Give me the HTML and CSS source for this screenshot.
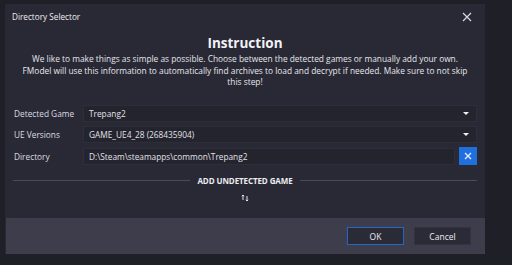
FILE: index.html
```html
<!DOCTYPE html>
<html>
<head>
<meta charset="utf-8">
<link rel="stylesheet" href="styles.css">
</head>
<body>
<div class="dialog">
  <div class="titlebar">
    <span class="title">Directory Selector</span>
    <svg class="close" width="10" height="10" viewBox="0 0 10 10"><path d="M1 1L9 9M9 1L1 9" stroke="#d8d8de" stroke-width="1.2"/></svg>
  </div>
  <div class="content">
    <h1 class="heading">Instruction</h1>
    <p class="intro">We like to make things as simple as possible. Choose between the detected games or manually add your own.<br>FModel will use this information to automatically find archives to load and decrypt if needed. Make sure to not skip<br>this step!</p>
    <div class="form">
      <div class="row">
        <span class="label">Detected Game</span>
        <div class="field select"><span>Trepang2</span><span class="caret"></span></div>
      </div>
      <div class="row">
        <span class="label">UE Versions</span>
        <div class="field select"><span>GAME_UE4_28 (268435904)</span><span class="caret"></span></div>
      </div>
      <div class="row">
        <span class="label">Directory</span>
        <div class="field text"><span>D:\Steam\steamapps\common\Trepang2</span></div>
        <button class="clear"><svg width="8" height="8" viewBox="0 0 8 8"><path d="M1 1L7 7M7 1L1 7" stroke="#e6eefa" stroke-width="1.3"/></svg></button>
      </div>
    </div>
    <div class="divider"><span class="line"></span><span class="divtext">ADD UNDETECTED GAME</span><span class="line"></span></div>
    <div class="toggle">
      <svg width="8" height="8" viewBox="0 0 8 8"><path d="M2 6V1M0.8 2.2L2 1L3.2 2.2M6 2V7M4.8 5.8L6 7L7.2 5.8" stroke="#e4e4ea" stroke-width="1" fill="none"/></svg>
    </div>
  </div>
  <div class="footer">
    <button class="btn ok">OK</button>
    <button class="btn">Cancel</button>
  </div>
</div>
</body>
</html>
```
FILE: styles.css
```css
html, body {
  margin: 0;
  padding: 0;
}
body {
  background: #1f1f28;
  width: 512px;
  height: 265px;
  overflow: hidden;
  font-family: "Open Sans", "Noto Sans", sans-serif;
  color: #e8e8ee;
  padding: 4px 0 0 5px;
  box-sizing: border-box;
}
.dialog {
  width: 480px;
  height: 250px;
  background: #292935;
  display: flex;
  flex-direction: column;
}
.titlebar {
  height: 25px;
  display: flex;
  align-items: center;
  justify-content: space-between;
  padding: 0 13px 0 7px;
  flex-shrink: 0;
}
.title {
  font-size: 8.2px;
  color: #eeeef2;
}
.close {
  display: block;
}
.content {
  flex: 1;
  display: flex;
  flex-direction: column;
  padding: 0 8px 0 8px;
}
.heading {
  margin: 5px 0 0;
  font-size: 13.5px;
  font-weight: 700;
  text-align: center;
  line-height: 18px;
  color: #f2f2f6;
}
.intro {
  margin: 1px -8px 0;
  font-size: 8.35px;
  line-height: 11.5px;
  text-align: center;
  white-space: nowrap;
  color: #e6e6ec;
}
.form {
  margin-top: 17px;
  display: flex;
  flex-direction: column;
  gap: 4.5px;
}
.row {
  display: flex;
  align-items: center;
  gap: 4px;
  height: 17px;
}
.label {
  width: 65px;
  padding-left: 1px;
  font-size: 8.3px;
  color: #dcdce2;
}
.field {
  flex: 1;
  height: 17px;
  box-sizing: border-box;
  background: #24242e;
  border: 1px solid #2e2e3a;
  display: flex;
  align-items: center;
  justify-content: space-between;
  padding: 0 6px 0 5px;
  font-size: 8.3px;
  color: #e2e2e8;
}
.caret {
  width: 0;
  height: 0;
  border-left: 3px solid transparent;
  border-right: 3px solid transparent;
  border-top: 3px solid #f0f0f4;
  margin-right: 1px;
}
.clear {
  width: 18px;
  height: 18px;
  padding: 0;
  border: none;
  background: #1f6fde;
  display: flex;
  align-items: center;
  justify-content: center;
}
.divider {
  margin-top: 10px;
  display: flex;
  align-items: center;
  gap: 7px;
}
.line {
  flex: 1;
  height: 1px;
  background: #4a4a58;
}
.divtext {
  font-size: 8px;
  font-weight: 700;
  color: #ececf0;
  letter-spacing: -0.1px;
}
.toggle {
  margin-top: 8px;
  display: flex;
  justify-content: center;
}
.footer {
  height: 36px;
  flex-shrink: 0;
  background: #3e3d4c;
  margin-left: 1px;
  display: flex;
  align-items: center;
  justify-content: flex-end;
  gap: 10px;
  padding-right: 14px;
}
.btn {
  width: 57px;
  height: 18px;
  box-sizing: border-box;
  background: #2b2a37;
  border: 1px solid #34333f;
  color: #ececf0;
  font-family: "Open Sans", "Noto Sans", sans-serif;
  font-size: 8.5px;
  padding: 0;
}
.btn.ok {
  border: 1px solid #2565c8;
}
```
